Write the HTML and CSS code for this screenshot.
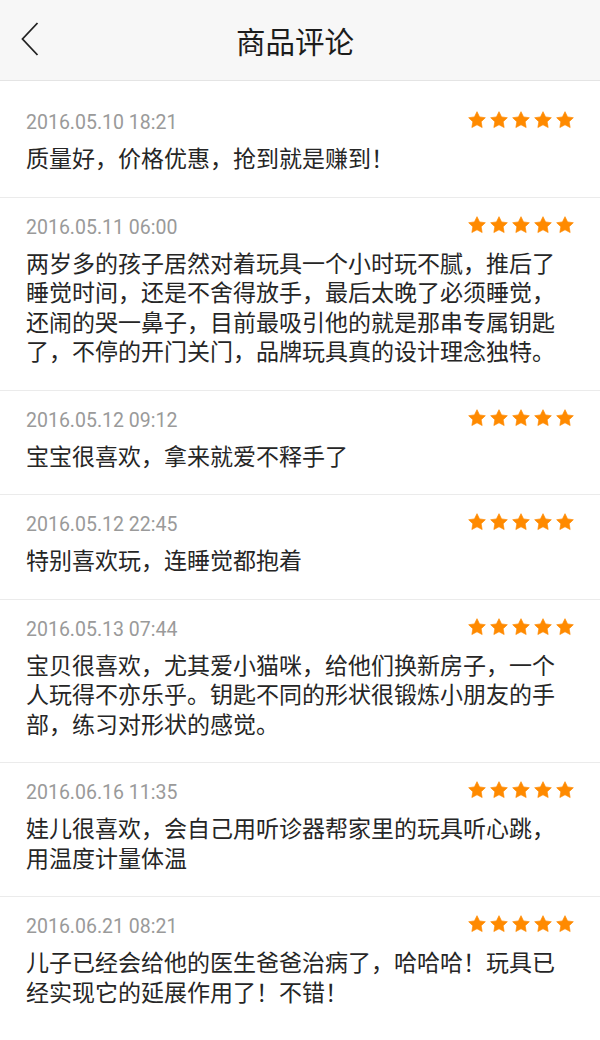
FILE: index.html
```html
<!DOCTYPE html>
<html lang="zh-CN">

<head>
    <meta charset="UTF-8">
    <meta name="viewport" content="width=device-width, initial-scale=1.0">
    <title>商品评论</title>
    <link rel="stylesheet" href="styles.css">
</head>

<body>

    <div class="header">
        <a href="#" class="back">
            <svg width="18" height="34" viewBox="0 0 18 34">
                <polyline points="16.5,1 1.5,17 16.5,33" fill="none" stroke="#222" stroke-width="1.8" />
            </svg>
        </a>
        <h1>商品评论</h1>
    </div>

    <ul class="review-list" id="reviewList"></ul>

    <script>
        const reviews = [
            { date: '2016.05.10 18:21', text: '质量好，价格优惠，抢到就是赚到！' },
            { date: '2016.05.11 06:00', text: '两岁多的孩子居然对着玩具一个小时玩不腻，推后了睡觉时间，还是不舍得放手，最后太晚了必须睡觉，还闹的哭一鼻子，目前最吸引他的就是那串专属钥匙了，不停的开门关门，品牌玩具真的设计理念独特。' },
            { date: '2016.05.12 09:12', text: '宝宝很喜欢，拿来就爱不释手了' },
            { date: '2016.05.12 22:45', text: '特别喜欢玩，连睡觉都抱着' },
            { date: '2016.05.13 07:44', text: '宝贝很喜欢，尤其爱小猫咪，给他们换新房子，一个人玩得不亦乐乎。钥匙不同的形状很锻炼小朋友的手部，练习对形状的感觉。' },
            { date: '2016.06.16 11:35', text: '娃儿很喜欢，会自己用听诊器帮家里的玩具听心跳，用温度计量体温' },
            { date: '2016.06.21 08:21', text: '儿子已经会给他的医生爸爸治病了，哈哈哈！玩具已经实现它的延展作用了！不错！' }
        ];

        const star = `<svg width="20" height="20" viewBox="0 0 24 24"><path d="M12 2l3.09 6.26L22 9.27l-5 4.87 1.18 6.88L12 17.77l-6.18 3.25L7 14.14 2 9.27l6.91-1.01z" fill="#ff8a00" stroke="#ff8a00" stroke-width="0.8" stroke-linejoin="round"/></svg>`;

        function renderReviews() {
            const list = document.getElementById('reviewList');
            let html = '';

            for (let i = 0; i < reviews.length; i++) {
                const r = reviews[i];
                html += `
                <li class="review">
                    <div class="review-top">
                        <span class="date">${r.date}</span>
                        <span class="stars">${star.repeat(5)}</span>
                    </div>
                    <p class="content">${r.text}</p>
                </li>
                `;
            }

            list.innerHTML = html;
        }

        renderReviews();
    </script>
</body>

</html>
```

FILE: styles.css
```css
body {
    margin: 0;
    background-color: #fff;
    font-family: "Noto Sans CJK SC", "Noto Sans", sans-serif;
    color: #222;
}

.header {
    position: relative;
    height: 80px;
    background-color: #f7f7f7;
    border-bottom: 1px solid #e4e4e4;
    display: flex;
    align-items: center;
    justify-content: center;
}

.header h1 {
    margin: 0 10px 0 0;
    font-size: 29.5px;
    font-weight: normal;
    color: #1c1c1c;
}

.back {
    position: absolute;
    left: 21px;
    top: 22px;
    display: block;
    width: 18px;
    height: 34px;
}

.back svg {
    display: block;
}

.review-list {
    list-style: none;
    margin: 0;
    padding: 12px 0 0;
}

.review {
    padding: 18px 25px 24px 26px;
    border-bottom: 1px solid #ebebeb;
}

.review:last-child {
    border-bottom: none;
}

.review-top {
    display: flex;
    justify-content: space-between;
    align-items: flex-start;
    height: 24px;
}

.date {
    font-family: Roboto, "Liberation Sans", sans-serif;
    font-size: 19.5px;
    line-height: 24px;
    color: #9a9a9a;
}

.stars {
    display: flex;
    gap: 2px;
    margin-top: -1px;
}

.stars svg {
    display: block;
}

.content {
    margin: 8px 0 0;
    font-size: 23px;
    line-height: 29.5px;
    color: #262626;
}
```
